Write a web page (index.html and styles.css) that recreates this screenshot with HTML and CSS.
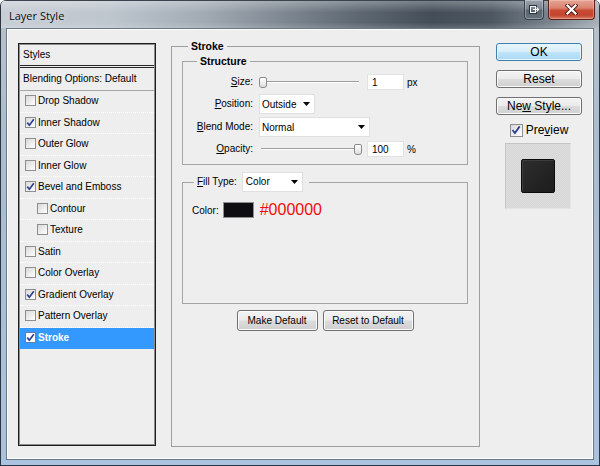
FILE: index.html
```html
<!DOCTYPE html>
<html>
<head>
<meta charset="utf-8">
<title>Layer Style</title>
<link rel="stylesheet" href="styles.css">
</head>
<body>
<div class="window">
  <div class="titlebar">
    <span class="title">Layer Style</span>
    <div class="caption">
      <div class="cap restore">
        <svg width="11" height="9" viewBox="0 0 11 9"><rect x="0.5" y="0.5" width="7" height="8" fill="none" stroke="#2b333b"/><rect x="1.5" y="1.5" width="5" height="6" fill="none" stroke="#f4f6f8"/><path d="M4 4.5h5M7.5 2.5l2 2-2 2" fill="none" stroke="#f4f6f8" stroke-width="1.2"/></svg>
      </div>
      <div class="cap close">
        <svg width="13" height="11" viewBox="0 0 13 11"><path d="M2.5 1.5l8 8M10.5 1.5l-8 8" stroke="#4a1710" stroke-width="4" stroke-linecap="square"/><path d="M2.5 1.5l8 8M10.5 1.5l-8 8" stroke="#ffffff" stroke-width="2.2" stroke-linecap="square"/></svg>
      </div>
    </div>
  </div>

  <div class="client">
    <div class="styles-list">
      <div class="list-head">Styles</div>
      <div class="list-blend">Blending Options: Default</div>
      <div class="row"><span class="cb"></span><span>Drop Shadow</span></div>
      <div class="row"><span class="cb on"><svg width="9" height="9" viewBox="0 0 9 9"><path d="M1.2 4.6l2.2 2.6 4.4-6" fill="none" stroke="#2d3f91" stroke-width="1.7"/></svg></span><span>Inner Shadow</span></div>
      <div class="row"><span class="cb"></span><span>Outer Glow</span></div>
      <div class="row"><span class="cb"></span><span>Inner Glow</span></div>
      <div class="row"><span class="cb on"><svg width="9" height="9" viewBox="0 0 9 9"><path d="M1.2 4.6l2.2 2.6 4.4-6" fill="none" stroke="#2d3f91" stroke-width="1.7"/></svg></span><span>Bevel and Emboss</span></div>
      <div class="row sub"><span class="cb"></span><span>Contour</span></div>
      <div class="row sub"><span class="cb"></span><span>Texture</span></div>
      <div class="row"><span class="cb"></span><span>Satin</span></div>
      <div class="row"><span class="cb"></span><span>Color Overlay</span></div>
      <div class="row"><span class="cb on"><svg width="9" height="9" viewBox="0 0 9 9"><path d="M1.2 4.6l2.2 2.6 4.4-6" fill="none" stroke="#2d3f91" stroke-width="1.7"/></svg></span><span>Gradient Overlay</span></div>
      <div class="row"><span class="cb"></span><span>Pattern Overlay</span></div>
      <div class="row selected"><span class="cb on"><svg width="9" height="9" viewBox="0 0 9 9"><path d="M1.2 4.6l2.2 2.6 4.4-6" fill="none" stroke="#2d3f91" stroke-width="1.7"/></svg></span><span>Stroke</span></div>
    </div>

    <fieldset class="group stroke-group">
      <legend class="legend-stroke">Stroke</legend>

      <fieldset class="group structure">
        <legend class="legend-structure">Structure</legend>
        <div class="form">
          <span class="lbl"><span><u>S</u>ize:</span></span>
          <div class="ctl">
            <div class="slider"><span class="thumb"></span></div>
            <span class="field">1</span><span class="unit">px</span>
          </div>
          <span class="lbl"><span><u>P</u>osition:</span></span>
          <div class="ctl">
            <span class="select sel-pos"><span>Outside</span><svg width="7" height="4" viewBox="0 0 7 4"><path d="M0 0h7L3.5 4z" fill="#000"/></svg></span>
          </div>
          <span class="lbl"><span><u>B</u>lend Mode:</span></span>
          <div class="ctl">
            <span class="select sel-blend"><span>Normal</span><svg width="7" height="4" viewBox="0 0 7 4"><path d="M0 0h7L3.5 4z" fill="#000"/></svg></span>
          </div>
          <span class="lbl"><span><u>O</u>pacity:</span></span>
          <div class="ctl">
            <div class="slider end"><span class="thumb"></span></div>
            <span class="field">100</span><span class="unit">%</span>
          </div>
        </div>
      </fieldset>

      <fieldset class="group fill">
        <legend class="legend-fill">
          <span><u>F</u>ill Type:</span>
          <span class="select sel-fill"><span>Color</span><svg width="7" height="4" viewBox="0 0 7 4"><path d="M0 0h7L3.5 4z" fill="#000"/></svg></span>
        </legend>
        <div class="color-row">
          <span>Color:</span>
          <span class="swatch"></span>
          <span class="hex">#000000</span>
        </div>
      </fieldset>

      <div class="btn-row">
        <span class="btn btn-make">Make Default</span>
        <span class="btn btn-reset">Reset to Default</span>
      </div>
    </fieldset>

    <div class="side">
      <span class="dbtn default"><span>OK</span></span>
      <span class="dbtn"><span>Reset</span></span>
      <span class="dbtn"><span>Ne<u>w</u> Style...</span></span>
      <div class="preview-row">
        <span class="cb big on"><svg width="10" height="10" viewBox="0 0 10 10"><path d="M1.5 5l2.4 3 4.8-6.6" fill="none" stroke="#2d3f91" stroke-width="1.8"/></svg></span>
        <span>Pre<u>v</u>iew</span>
      </div>
      <div class="preview">
        <span class="preview-square"></span>
      </div>
    </div>
  </div>
</div>
</body>
</html>
```

FILE: styles.css
```css
* { box-sizing: border-box; }

html, body { margin: 0; padding: 0; }

body {
  width: 600px;
  height: 466px;
  overflow: hidden;
  background: #ffffff;
  font-family: "Liberation Sans", Arial, sans-serif;
  font-size: 10px;
  color: #000;
}

.window {
  width: 600px;
  height: 466px;
  display: flex;
  flex-direction: column;
  border: 1px solid #2c3640;
  border-top: none;
  border-radius: 6px 6px 0 0;
  overflow: hidden;
  background: linear-gradient(to bottom, #b8c1ca 0%, #aabcd0 35%, #a9c3e0 100%);
}

/* ---------- title bar ---------- */
.titlebar {
  height: 28px;
  flex: none;
  display: flex;
  justify-content: space-between;
  align-items: flex-start;
  padding: 0 4px 0 8px;
  box-shadow: inset 0 1px 0 #3b444e;
  background:
    linear-gradient(to bottom, rgba(255,255,255,0.30) 0%, rgba(255,255,255,0) 45%, rgba(255,255,255,0) 80%, rgba(255,255,255,0.15) 100%),
    linear-gradient(90deg, #c7ced5 0%, #bec6ce 18%, #a2abb4 34%, #7c8690 48%, #5d6772 60%, #444e59 72%, #4d5762 82%, #7a848e 92%, #a8b0b8 100%);
}

.title {
  font-family: "Open Sans", "Liberation Sans", sans-serif;
  font-size: 11px;
  line-height: 14px;
  margin-top: 9px;
  color: #0d0d0d;
  text-shadow: 0 0 6px rgba(255,255,255,0.7);
}

.caption {
  display: flex;
  gap: 4px;
}

.cap {
  height: 20px;
  display: flex;
  align-items: center;
  justify-content: center;
  border-radius: 0 0 4px 4px;
}

.restore {
  width: 20px;
  border: 1px solid #38414b;
  border-top: none;
  box-shadow: inset 0 0 0 1px rgba(255,255,255,0.3);
  background: linear-gradient(to bottom, #9aa3ad 0%, #7a848f 45%, #5b6570 55%, #66717c 100%);
}

.close {
  width: 47px;
  border: 1px solid #5a2118;
  border-top: none;
  box-shadow: inset 0 0 0 1px rgba(255,220,210,0.35);
  background: linear-gradient(to bottom, #e7a596 0%, #d9826f 42%, #c84a33 55%, #c34630 80%, #dc7a63 100%);
}

/* ---------- client ---------- */
.client {
  flex: 1;
  margin: 0 5px 5px 5px;
  border: 1px solid #6b7986;
  box-shadow: inset 0 0 0 1px #ffffff;
  background: #eeeeee;
  display: flex;
  padding: 11px 11px 12px 11px;
}

/* ---------- styles list ---------- */
.styles-list {
  width: 138px;
  flex: none;
  margin: 3px 15px 1px 0;
  border: 1px solid #1e1e1e;
  box-shadow: inset 0 0 0 1px #8c8c8c;
  padding: 1px;
  display: flex;
  flex-direction: column;
  background: #eeeeee;
}

.list-head {
  height: 23px;
  display: flex;
  align-items: center;
  padding: 0 0 1px 3px;
  border-bottom: 3px double #262626;
  flex: none;
}

.list-blend {
  height: 23px;
  display: flex;
  align-items: center;
  padding: 0 0 1px 3px;
  border-bottom: 1px solid #a6a6a6;
  flex: none;
}

.row {
  height: 21.5px;
  flex: none;
  display: flex;
  align-items: center;
  padding: 0 0 1px 5px;
  border-bottom: 1px dotted #ffffff;
}

.row.sub { padding-left: 17px; }

.row.selected {
  background: #3399ff;
  color: #ffffff;
  font-weight: bold;
  border-bottom: none;
}

.cb {
  width: 11px;
  height: 11px;
  flex: none;
  margin-right: 2px;
  border: 1px solid #8d8e8f;
  background: linear-gradient(135deg, #d8d8d8 0%, #f4f4f4 70%, #ffffff 100%);
  display: flex;
  align-items: center;
  justify-content: center;
}

.row.selected .cb { background: #ffffff; border-color: #5d7fb5; }

.cb.big {
  width: 13px;
  height: 13px;
  margin-right: 0;
}

/* ---------- group boxes ---------- */
.group {
  margin: 0;
  min-width: 0;
  border: 1px solid #a4a4a4;
}

.group legend {
  padding: 0 3px;
  line-height: 13px;
}

.stroke-group {
  width: 309px;
  flex: none;
  padding: 2px 11px 0 10px;
  display: flex;
  flex-direction: column;
  border-color: #9e9e9e;
}

.legend-stroke {
  margin-left: 6px;
  font-weight: bold;
  font-size: 10.5px;
}

.structure {
  padding: 5px 0 6px 0;
}

.legend-structure {
  margin-left: 14px;
  font-weight: bold;
  font-size: 10.5px;
}

.form {
  display: grid;
  grid-template-columns: 70px 1fr;
  grid-template-rows: 18px 20px 20px 18px;
  column-gap: 6px;
  row-gap: 3px;
}

.lbl {
  display: flex;
  align-items: center;
  justify-content: flex-end;
  padding-bottom: 1px;
}

.ctl {
  display: flex;
  align-items: center;
}

.slider {
  width: 103px;
  height: 12px;
  display: flex;
  align-items: center;
  justify-content: flex-start;
  background:
    linear-gradient(to bottom, #9c9c9c 0 1px, #ffffff 1px 2px) 2px 50% / 98px 2px no-repeat;
}

.slider.end { justify-content: flex-end; }

.thumb {
  width: 8px;
  height: 11px;
  border: 1px solid #8a8a8a;
  border-radius: 2px 2px 3px 3px;
  background: linear-gradient(to bottom, #ffffff, #dedede);
}

.field {
  width: 37px;
  height: 16px;
  margin-left: 5px;
  padding-left: 4px;
  background: #ffffff;
  border: 1px solid #e2e2e2;
  display: flex;
  align-items: center;
}

.unit { margin-left: 3px; }

.select {
  height: 20px;
  display: flex;
  align-items: center;
  justify-content: space-between;
  padding: 0 4px 0 2px;
  background: #ffffff;
  border: 1px solid #e0e0e0;
}

.sel-pos { width: 56px; }
.sel-blend { width: 111px; }
.sel-fill { width: 61px; padding-left: 3px; padding-right: 4px; }

.fill {
  margin-top: 7px;
  padding: 10px 0 85px 9px;
}

.legend-fill {
  margin-left: 2px;
  padding: 0 6px 0 3px !important;
  display: flex;
  align-items: center;
  gap: 5px;
  line-height: 20px !important;
}

.color-row {
  height: 16px;
  display: flex;
  align-items: center;
}

.swatch {
  width: 31px;
  height: 16px;
  margin-left: 4px;
  background: #0e0e12;
  border: 1px solid #8f8f8f;
}

.hex {
  margin-left: 6px;
  font-size: 16px;
  color: #f20d0d;
  line-height: 16px;
}

.btn-row {
  margin-top: 6px;
  display: flex;
  justify-content: center;
  gap: 5px;
}

.btn, .dbtn {
  display: flex;
  align-items: center;
  justify-content: center;
  border: 1px solid #707070;
  border-radius: 3px;
  box-shadow: inset 0 0 0 1px #fbfbfb;
  background: linear-gradient(to bottom, #f3f3f3 0%, #ebebeb 48%, #dcdcdc 52%, #cfcfcf 100%);
}

.btn {
  height: 21px;
  padding-bottom: 1px;
}

.btn-make { width: 81px; }
.btn-reset { width: 91px; }

/* ---------- side column ---------- */
.side {
  width: 86px;
  flex: none;
  margin: 3px 0 0 16px;
  display: flex;
  flex-direction: column;
  gap: 9px;
  font-size: 12px;
}

.dbtn {
  height: 18px;
  font-size: 12px;
  line-height: 14px;
}

.dbtn.default {
  border-color: #3c7fb1;
  box-shadow: inset 0 0 0 1px #e8f6fd;
  background: linear-gradient(to bottom, #e9f5fc 0%, #d6eefb 48%, #bee4f9 52%, #a9d8f3 100%);
}

.preview-row {
  margin-top: -1px;
  height: 14px;
  display: flex;
  align-items: center;
  justify-content: center;
  gap: 3px;
}

.preview {
  width: 66px;
  height: 66px;
  margin: -3px 0 0 9px;
  display: flex;
  align-items: center;
  justify-content: center;
  border-top: 1px solid #c4c4c4;
  border-left: 1px solid #c4c4c4;
  border-right: 1px solid #e4e4e4;
  border-bottom: 1px solid #e4e4e4;
  background: repeating-conic-gradient(#d5d5d5 0 25%, #dfdfdf 0 50%) 0 0 / 2px 2px;
}

.preview-square {
  width: 34px;
  height: 34px;
  border: 1px solid #0b0b0b;
  border-radius: 2px;
  background: linear-gradient(135deg, #2e2e2e 0%, #232323 60%, #1d1d1d 100%);
  box-shadow: inset 1px 1px 0 #3c3c3c;
}
```
